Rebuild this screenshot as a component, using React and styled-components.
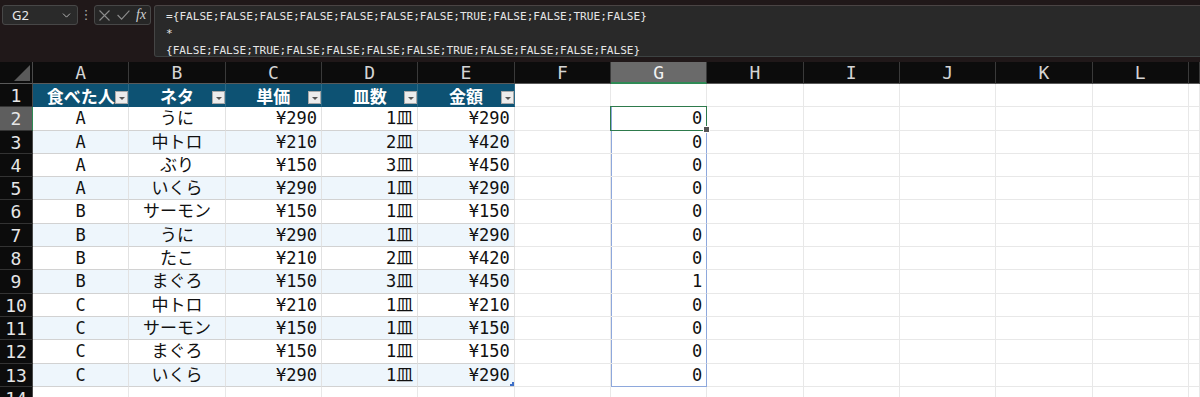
import React from 'react';
import styled, { createGlobalStyle } from 'styled-components';
import { ChevronDown } from 'lucide-react';

const GlobalStyle = createGlobalStyle`
  html, body {
    margin: 0;
    padding: 0;
    background: #201819;
    overflow: hidden;
  }
`;

const COLS = ['A', 'B', 'C', 'D', 'E', 'F', 'G', 'H', 'I', 'J', 'K', 'L', ''];
const HEADERS = ['食べた人', 'ネタ', '単価', '皿数', '金額'];

const rows = [
  ['A', 'うに', '¥290', '1皿', '¥290'],
  ['A', '中トロ', '¥210', '2皿', '¥420'],
  ['A', 'ぶり', '¥150', '3皿', '¥450'],
  ['A', 'いくら', '¥290', '1皿', '¥290'],
  ['B', 'サーモン', '¥150', '1皿', '¥150'],
  ['B', 'うに', '¥290', '1皿', '¥290'],
  ['B', 'たこ', '¥210', '2皿', '¥420'],
  ['B', 'まぐろ', '¥150', '3皿', '¥450'],
  ['C', '中トロ', '¥210', '1皿', '¥210'],
  ['C', 'サーモン', '¥150', '1皿', '¥150'],
  ['C', 'まぐろ', '¥150', '1皿', '¥150'],
  ['C', 'いくら', '¥290', '1皿', '¥290'],
];

const gValues = [0, 0, 0, 0, 0, 0, 0, 1, 0, 0, 0, 0];

const CancelIcon = () => (
  <svg width="11" height="11" viewBox="0 0 11 11">
    <path d="M0.5 0.5 L10.5 10.5 M10.5 0.5 L0.5 10.5" stroke="#8c8c8c" strokeWidth="1.1" fill="none" />
  </svg>
);

const EnterIcon = () => (
  <svg width="13" height="10" viewBox="0 0 13 10">
    <path d="M0.6 5 L4.6 9.2 L12.4 0.6" stroke="#8c8c8c" strokeWidth="1.1" fill="none" />
  </svg>
);

const App = () => {
  return (
    <>
      <GlobalStyle />
      <FormulaBar>
        <NameBox>
          <span>G2</span>
          <ChevronDown size={13} color="#c8c8c8" strokeWidth={1.6} />
        </NameBox>
        <Dots>⋮</Dots>
        <FxBox>
          <CancelIcon />
          <EnterIcon />
          <Fx>fx</Fx>
        </FxBox>
        <FormulaInput>
          <div>={'{'}FALSE;FALSE;FALSE;FALSE;FALSE;FALSE;FALSE;TRUE;FALSE;FALSE;TRUE;FALSE{'}'}</div>
          <div>*</div>
          <div>{'{'}FALSE;FALSE;TRUE;FALSE;FALSE;FALSE;FALSE;TRUE;FALSE;FALSE;FALSE;FALSE{'}'}</div>
        </FormulaInput>
      </FormulaBar>

      <Sheet>
        <Corner><CornerMark /></Corner>
        {COLS.map((c, i) => (
          <ColHead key={'h' + i} $active={c === 'G'}>{c}</ColHead>
        ))}

        <RowHead>1</RowHead>
        {COLS.map((c, i) =>
          i < 5 ? (
            <TableHead key={'t' + i}>
              {HEADERS[i]}
              <FilterBtn />
            </TableHead>
          ) : (
            <Cell key={'t' + i} />
          )
        )}

        {rows.map((r, ri) => {
          const band = ri % 2 === 1;
          const last = ri === rows.length - 1;
          return (
            <React.Fragment key={'r' + ri}>
              <RowHead $active={ri === 0}>{ri + 2}</RowHead>
              {COLS.map((c, ci) => {
                if (ci < 5) {
                  return (
                    <Cell key={ci} $table $band={band} $align={ci < 2 ? 'center' : 'right'}>
                      {r[ci]}
                      {last && ci === 4 && <ResizeMark />}
                    </Cell>
                  );
                }
                if (c === 'G') {
                  return (
                    <Cell key={ci} $align="right" $range $rangeEnd={last} $active={ri === 0}>
                      {gValues[ri]}
                    </Cell>
                  );
                }
                return <Cell key={ci} />;
              })}
            </React.Fragment>
          );
        })}

        <RowHead>14</RowHead>
        {COLS.map((c, i) => <Cell key={'e' + i} />)}
      </Sheet>
    </>
  );
};

export default App;

const FormulaBar = styled.div`
  display: flex;
  align-items: flex-start;
  height: 62px;
  box-sizing: border-box;
  padding: 5px 0 0 2px;
  background: #201819;
`;

const NameBox = styled.div`
  display: flex;
  align-items: center;
  justify-content: space-between;
  width: 76px;
  height: 20px;
  box-sizing: border-box;
  padding: 0 4px 0 9px;
  background: #2a2a2a;
  border: 1px solid #474747;
  border-radius: 3px;
  color: #e8e8e8;
  font: 13px/18px "Noto Sans", "DejaVu Sans", sans-serif;
`;

const Dots = styled.div`
  width: 16px;
  text-align: center;
  color: #a8a8a8;
  font: 13px/20px "DejaVu Sans", sans-serif;
`;

const FxBox = styled.div`
  display: flex;
  align-items: center;
  gap: 7px;
  width: 57px;
  height: 20px;
  box-sizing: border-box;
  padding: 0 3px 0 4px;
  background: #262626;
  border: 1px solid #474747;
  border-radius: 3px;
`;

const Fx = styled.span`
  margin-left: -1px;
  color: #d0d0d0;
  font: italic 14px/18px "Liberation Serif", serif;
`;

const FormulaInput = styled.div`
  flex: 1;
  height: 52px;
  margin-left: 3px;
  box-sizing: border-box;
  padding: 2px 0 0 11px;
  background: #292929;
  border-top: 1px solid #4a4444;
  border-left: 1px solid #454545;
  border-bottom: 1px solid #3c4242;
  border-radius: 3px 0 0 3px;
  color: #e6e6e6;
  font: 11.1px/17px "DejaVu Sans Mono", monospace;
  white-space: pre;
`;

const Sheet = styled.div`
  display: grid;
  grid-template-columns: 33px repeat(12, 96.33px) 1fr;
  grid-template-rows: 22px;
  grid-auto-rows: 23.3px;
  background: #fff;
`;

const Corner = styled.div`
  display: flex;
  align-items: flex-end;
  justify-content: flex-end;
  padding: 0 2px 2px 0;
  box-sizing: border-box;
  background: #0c0c0c;
  border-right: 1px solid #4a4a4a;
  border-bottom: 1px solid #5a5a5a;
`;

const CornerMark = styled.span`
  width: 0;
  height: 0;
  border-left: 16px solid transparent;
  border-bottom: 16px solid #5a5a5a;
`;

const ColHead = styled.div`
  box-sizing: border-box;
  background: ${p => (p.$active ? '#6a6a6a' : '#0c0c0c')};
  border-right: 1px solid #3a3a3a;
  border-bottom: ${p => (p.$active ? '2px solid #2f8a55' : '1px solid #5a5a5a')};
  color: ${p => (p.$active ? '#f2f2f2' : '#d4d4d4')};
  text-align: center;
  font: 18px/22px "DejaVu Sans Mono", monospace;
`;

const RowHead = styled.div`
  box-sizing: border-box;
  background: ${p => (p.$active ? '#5e5e5e' : '#0c0c0c')};
  border-right: 1px solid ${p => (p.$active ? '#2f8a55' : '#4a4a4a')};
  border-bottom: 1px solid #333;
  color: #e6e6e6;
  text-align: center;
  font: 18px/23px "DejaVu Sans Mono", monospace;
  overflow: hidden;
`;

const TableHead = styled.div`
  position: relative;
  box-sizing: border-box;
  background: #0d5273;
  border-right: 1px solid #2c6a87;
  border-bottom: 1px solid #0d5273;
  color: #fff;
  text-align: center;
  white-space: nowrap;
  font: bold 17px/23px "Noto Sans CJK JP", sans-serif;
`;

const FilterBtn = styled.span`
  position: absolute;
  right: 0;
  bottom: 2px;
  width: 13px;
  height: 13px;
  box-sizing: border-box;
  background: #ececec;
  border: 1px solid #a9a9a9;

  &::after {
    content: '';
    position: absolute;
    left: 3px;
    top: 5px;
    border-left: 3px solid transparent;
    border-right: 3px solid transparent;
    border-top: 3px solid #555;
  }
`;

const Cell = styled.div`
  position: relative;
  box-sizing: border-box;
  padding: 0 4px;
  background: ${p => (p.$band ? '#eef6fc' : '#fff')};
  border-right: 1px solid ${p => (p.$table ? '#e2e2e2' : '#e8e8e8')};
  border-bottom: 1px solid ${p => (p.$table ? '#d2d2d2' : '#e8e8e8')};
  color: #111;
  text-align: ${p => p.$align || 'left'};
  white-space: nowrap;
  font: 17px/23px "DejaVu Sans Mono", "Noto Sans CJK JP", monospace;

  ${p =>
    p.$range &&
    `
    border-right-color: #8ea8dc;
    box-shadow: inset 1px 0 #8ea8dc;
    ${p.$rangeEnd ? 'border-bottom-color: #8ea8dc;' : ''}
  `}

  ${p =>
    p.$active &&
    `
    &::after {
      content: '';
      position: absolute;
      left: -1px;
      top: -1px;
      right: -1px;
      bottom: -1px;
      border: 1.5px solid #2e7a4c;
    }
    &::before {
      content: '';
      position: absolute;
      right: -4px;
      bottom: -3px;
      width: 5px;
      height: 5px;
      background: #555;
      border: 1px solid #fff;
      z-index: 2;
    }
  `}
`;

const ResizeMark = styled.span`
  position: absolute;
  right: 0;
  bottom: 0;
  width: 4px;
  height: 4px;
  border-right: 2px solid #3d6fc8;
  border-bottom: 2px solid #3d6fc8;
  box-sizing: border-box;
`;
